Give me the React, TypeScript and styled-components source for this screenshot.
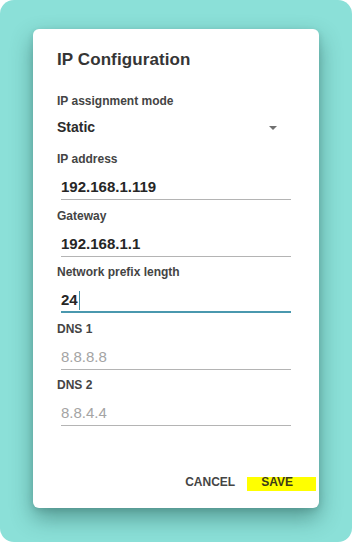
import styled, { createGlobalStyle } from 'styled-components'

const GlobalStyle = createGlobalStyle`
  html, body {
    margin: 0;
    padding: 0;
    background: #ffffff;
  }
  body {
    font-family: "Liberation Sans", Arial, sans-serif;
  }
`

const Frame = styled.div`
  width: 352px;
  height: 542px;
  box-sizing: border-box;
  padding: 29px 0 0 33px;
  background: #8be0d8;
  border-radius: 14px;
  overflow: hidden;
`

const Dialog = styled.div`
  width: 286px;
  height: 479px;
  box-sizing: border-box;
  padding: 21px 3px 17px 24px;
  background: #ffffff;
  border-radius: 6px;
  box-shadow: 0 10px 22px rgba(20, 70, 65, 0.45), 0 2px 6px rgba(0, 0, 0, 0.12);
  display: flex;
  flex-direction: column;
`

const Title = styled.h2`
  margin: 0;
  font-size: 17px;
  line-height: 20px;
  font-weight: 700;
  color: #353535;
  letter-spacing: 0.1px;
`

const Fields = styled.div`
  margin-top: 23px;
  margin-right: 25px;
  display: flex;
  flex-direction: column;
`

const Field = styled.div<{ $gap: number }>`
  margin-top: ${p => p.$gap}px;
  display: flex;
  flex-direction: column;
`

const Label = styled.label`
  font-size: 12px;
  line-height: 16px;
  font-weight: 700;
  color: #444444;
`

const SelectRow = styled.div`
  margin-top: 8px;
  display: flex;
  align-items: center;
  justify-content: space-between;
  padding-right: 14px;
`

const SelectValue = styled.span`
  font-size: 14px;
  line-height: 20px;
  font-weight: 700;
  color: #2b2b2b;
`

const Arrow = styled.span`
  width: 0;
  height: 0;
  border-left: 4px solid transparent;
  border-right: 4px solid transparent;
  border-top: 4px solid #707070;
  margin-top: 1px;
`

const Input = styled.div<{ $focused?: boolean; $placeholder?: boolean }>`
  margin: 10px 0 0 4px;
  padding-bottom: ${p => (p.$focused ? 1 : 2)}px;
  border-bottom: ${p => (p.$focused ? '2px solid #4a98ae' : '1px solid #b4b4b4')};
  font-size: 15px;
  line-height: 20px;
  font-weight: ${p => (p.$placeholder ? 400 : 700)};
  color: ${p => (p.$placeholder ? '#a4a4a4' : '#262626')};
  display: flex;
  align-items: center;
`

const Caret = styled.span`
  display: inline-block;
  width: 1.5px;
  height: 19px;
  margin-left: 1px;
  background: #3f8fa8;
`

const Actions = styled.div`
  margin-top: auto;
  display: flex;
  justify-content: flex-end;
  align-items: flex-start;
  gap: 12px;
`

const ActionButton = styled.button<{ $highlight?: boolean }>`
  border: none;
  margin: 0;
  height: 14px;
  padding: ${p => (p.$highlight ? '0 23px 0 14px' : '0')};
  background: ${p => (p.$highlight ? '#ffff00' : 'transparent')};
  font-family: "Liberation Sans", Arial, sans-serif;
  font-size: 12px;
  line-height: 10px;
  font-weight: 700;
  color: ${p => (p.$highlight ? '#3a3a1a' : '#454545')};
  display: flex;
  align-items: flex-start;
  cursor: pointer;
`

interface TextField {
  label: string
  value: string
  placeholder?: boolean
  focused?: boolean
}

const fields: TextField[] = [
  { label: 'IP address', value: '192.168.1.119' },
  { label: 'Gateway', value: '192.168.1.1' },
  { label: 'Network prefix length', value: '24', focused: true },
  { label: 'DNS 1', value: '8.8.8.8', placeholder: true },
  { label: 'DNS 2', value: '8.8.4.4', placeholder: true },
]

export default function App(): JSX.Element {
  return (
    <>
      <GlobalStyle />
      <Frame>
        <Dialog>
          <Title>IP Configuration</Title>
          <Fields>
            <Field $gap={0}>
              <Label>IP assignment mode</Label>
              <SelectRow>
                <SelectValue>Static</SelectValue>
                <Arrow />
              </SelectRow>
            </Field>
            {fields.map((f, i) => (
              <Field key={f.label} $gap={i === 0 ? 14 : 7.5}>
                <Label>{f.label}</Label>
                <Input $focused={f.focused} $placeholder={f.placeholder}>
                  {f.value}
                  {f.focused && <Caret />}
                </Input>
              </Field>
            ))}
          </Fields>
          <Actions>
            <ActionButton>CANCEL</ActionButton>
            <ActionButton $highlight>SAVE</ActionButton>
          </Actions>
        </Dialog>
      </Frame>
    </>
  )
}
